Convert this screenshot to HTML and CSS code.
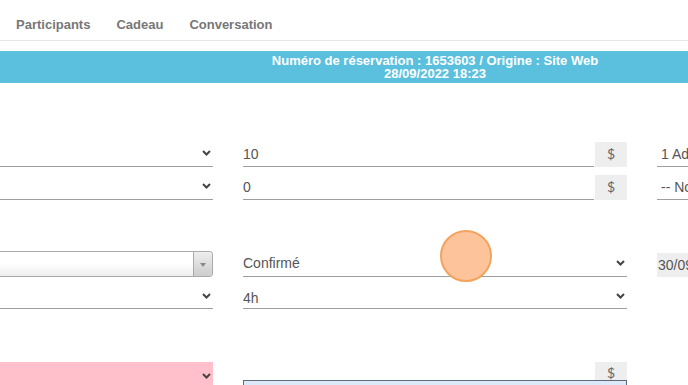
FILE: index.html
```html
<!DOCTYPE html>
<html lang="fr">
<head>
  <meta charset="UTF-8" />
  <meta name="viewport" content="width=device-width, initial-scale=1" />
  <title>Réservation 1653603</title>
  <link rel="stylesheet" href="styles.css">
</head>
<body>

<ul class="nav-tabs">
  <li>Participants</li>
  <li>Cadeau</li>
  <li>Conversation</li>
</ul>

<div class="bandeau">
  <div>Numéro de réservation : 1653603 / Origine : Site Web</div>
  <div>28/09/2022 18:23</div>
</div>

<div class="form">
  <!-- tarifs -->
  <div class="row row-1">
    <div class="select"><span class="chevron"></span></div>
    <div class="input-group">
      <div class="input">10</div>
      <span class="addon">$</span>
    </div>
    <div class="select select-droite">1 Adulte</div>
  </div>
  <div class="row row-2">
    <div class="select"><span class="chevron"></span></div>
    <div class="input-group">
      <div class="input">0</div>
      <span class="addon">$</span>
    </div>
    <div class="select select-droite">-- Non défini --</div>
  </div>

  <!-- statut -->
  <div class="row row-3">
    <div class="select2"><span class="select2-arrow"></span></div>
    <div class="select">Confirmé<span class="chevron"></span></div>
    <div class="date">30/09/2022</div>
  </div>
  <div class="row row-4">
    <div class="select"><span class="chevron"></span></div>
    <div class="select">4h<span class="chevron"></span></div>
    <div></div>
  </div>

  <!-- paiement -->
  <div class="row row-5">
    <div class="select select-rose"><span class="chevron"></span></div>
    <div class="montant">
      <span class="addon">$</span>
      <div class="montant-input"></div>
    </div>
    <div></div>
  </div>
</div>

<div class="clic"></div>

</body>
</html>
```

FILE: styles.css
```css
body, html {
  margin: 0; padding: 0;
  font-family: "Liberation Sans", Arial, sans-serif;
  background-color: #fff;
  color: #555;
  overflow: hidden;
}

.nav-tabs {
  list-style: none;
  margin: 0;
  padding: 17px 0 0 16px;
  height: 23px;
  display: flex;
  gap: 26px;
  border-bottom: 1px solid #e6e6e6;
  font-size: 13px;
  font-weight: bold;
  color: #777;
}

.bandeau {
  margin-top: 10px;
  height: 32px;
  box-sizing: border-box;
  padding: 3px 0 0 182px;
  background-color: #5bc0de;
  color: #fff;
  font-size: 13px;
  font-weight: bold;
  line-height: 13px;
  text-align: center;
}

.form {
  padding-top: 59px;
}

.row {
  display: grid;
  grid-template-columns: 213px 384px 1fr;
  column-gap: 30px;
  height: 24px;
  font-size: 14px;
}

.row-2 { margin-top: 9px; }
.row-3 { margin-top: 52px; height: 26px; }
.row-4 { margin-top: 9px; height: 23px; }
.row-5 { margin-top: 53px; height: 23px; }

.select, .input {
  position: relative;
  box-sizing: border-box;
  height: 100%;
  border-bottom: 1px solid #9e9e9e;
  line-height: 24px;
  white-space: nowrap;
  overflow: hidden;
}

.select-droite {
  padding-left: 4px;
}

.chevron {
  position: absolute;
  right: 2px;
  top: 50%;
  width: 9px;
  height: 6px;
  margin-top: -4px;
  background: url("data:image/svg+xml,%3Csvg xmlns='http://www.w3.org/2000/svg' viewBox='0 0 9 6'%3E%3Cpath d='M1 1l3.5 3.5L8 1' fill='none' stroke='%23444' stroke-width='2'/%3E%3C/svg%3E") no-repeat;
}

.input-group {
  display: flex;
}

.input-group .input {
  flex: 1;
}

.addon {
  width: 32px;
  margin-left: 1px;
  background-color: #eee;
  text-align: center;
  color: #666;
  font-family: Lato, sans-serif;
  line-height: 24px;
}

.select2 {
  position: relative;
  box-sizing: border-box;
  height: 26px;
  border: 1px solid #aaa;
  border-left: none;
  border-radius: 0 4px 4px 0;
  background: linear-gradient(#fff 50%, #eee);
}

.select2-arrow {
  position: absolute;
  right: 0; top: 0; bottom: 0;
  width: 18px;
  border-left: 1px solid #aaa;
  border-radius: 0 4px 4px 0;
  background: linear-gradient(#eee, #ccc);
}

.select2-arrow::after {
  content: "";
  position: absolute;
  left: 6px; top: 11px;
  border: 3px solid transparent;
  border-top: 4px solid #888;
  border-bottom: none;
}

.date {
  margin-top: 2px;
  padding-left: 1px;
  background-color: #eee;
  line-height: 24px;
  white-space: nowrap;
  overflow: hidden;
}

.select-rose {
  background-color: #ffc0cb;
  border-bottom: none;
}

.montant {
  display: flex;
  flex-direction: column;
  align-items: flex-end;
}

.montant .addon {
  height: 18px;
  line-height: 22px;
}

.montant-input {
  align-self: stretch;
  height: 10px;
  background-color: #dce9f9;
  border: 1px solid #5f6b78;
}

.clic {
  position: absolute;
  left: 440px;
  top: 230px;
  width: 48px;
  height: 48px;
  border-radius: 50%;
  background-color: #fdc49b;
  border: 2px solid #f3a35e;
}
```
